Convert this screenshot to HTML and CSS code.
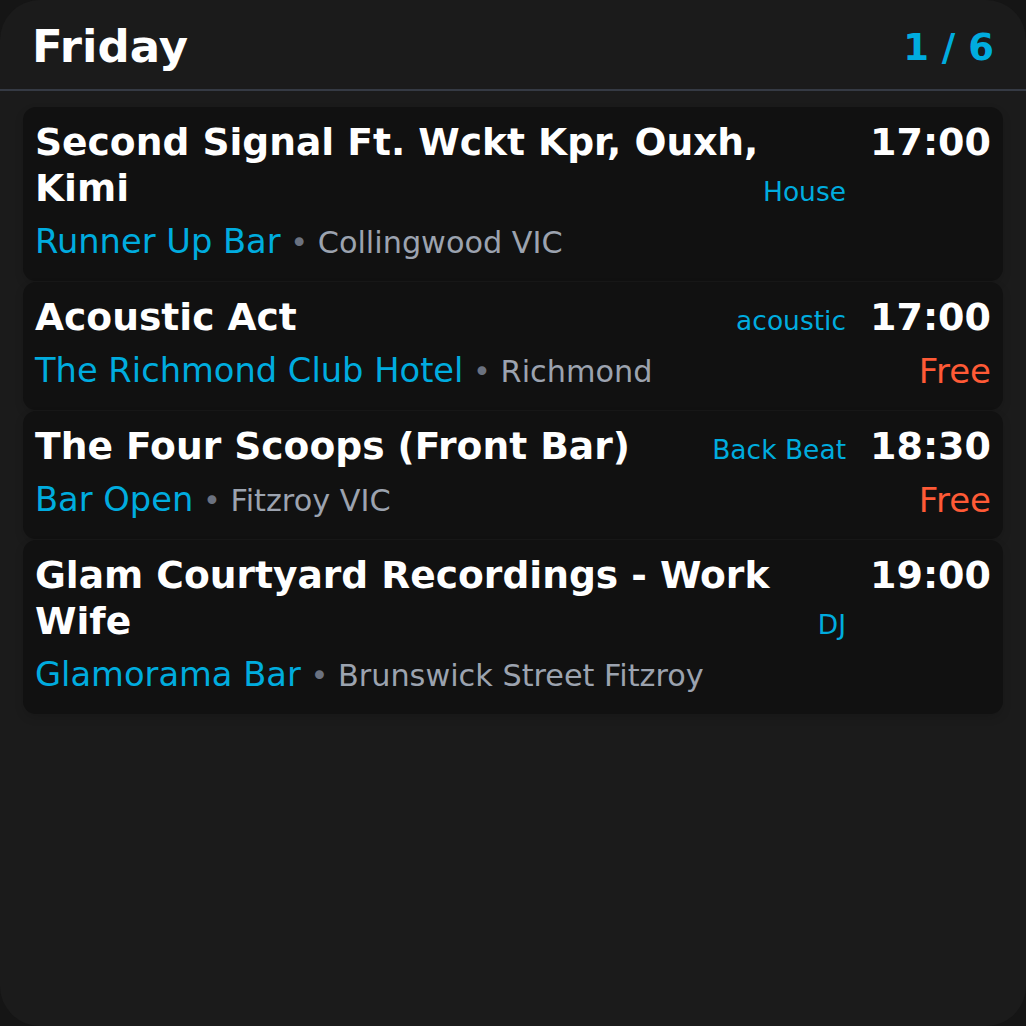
FILE: index.html
```html
<!DOCTYPE html>
<html>
<head>
<meta charset="utf-8">
<link rel="stylesheet" href="styles.css">
</head>
<body>
<div class="panel">
  <header class="header">
    <h1 class="day">Friday</h1>
    <div class="counter">1 / 6</div>
  </header>
  <div class="list">
    <div class="card">
      <div class="main">
        <div class="title-row">
          <div class="title">Second Signal Ft. Wckt Kpr, Ouxh, Kimi</div>
          <div class="genre">House</div>
        </div>
        <div class="place"><span class="venue">Runner Up Bar</span><span class="sep"> • </span><span class="loc">Collingwood VIC</span></div>
      </div>
      <div class="when">
        <div class="time">17:00</div>
      </div>
    </div>
    <div class="card">
      <div class="main">
        <div class="title-row">
          <div class="title">Acoustic Act</div>
          <div class="genre">acoustic</div>
        </div>
        <div class="place"><span class="venue">The Richmond Club Hotel</span><span class="sep"> • </span><span class="loc">Richmond</span></div>
      </div>
      <div class="when">
        <div class="time">17:00</div>
        <div class="price">Free</div>
      </div>
    </div>
    <div class="card">
      <div class="main">
        <div class="title-row">
          <div class="title">The Four Scoops (Front Bar)</div>
          <div class="genre">Back Beat</div>
        </div>
        <div class="place"><span class="venue">Bar Open</span><span class="sep"> • </span><span class="loc">Fitzroy VIC</span></div>
      </div>
      <div class="when">
        <div class="time">18:30</div>
        <div class="price">Free</div>
      </div>
    </div>
    <div class="card">
      <div class="main">
        <div class="title-row">
          <div class="title">Glam Courtyard Recordings - Work Wife</div>
          <div class="genre">DJ</div>
        </div>
        <div class="place"><span class="venue">Glamorama Bar</span><span class="sep"> • </span><span class="loc">Brunswick Street Fitzroy</span></div>
      </div>
      <div class="when">
        <div class="time">19:00</div>
      </div>
    </div>
  </div>
</div>
</body>
</html>
```
FILE: styles.css
```css
html, body {
  margin: 0;
  padding: 0;
  background: #151515;
}
body {
  font-family: "DejaVu Sans", sans-serif;
  color: #ffffff;
}
.panel {
  width: 1026px;
  height: 1026px;
  box-sizing: border-box;
  background: #1b1b1b;
  border-radius: 40px;
  overflow: hidden;
}
.header {
  height: 91px;
  box-sizing: border-box;
  padding: 5px 32px 0 32px;
  display: flex;
  align-items: center;
  justify-content: space-between;
  border-bottom: 2px solid #353a44;
}
.day {
  margin: 0;
  font-size: 45px;
  font-weight: bold;
  line-height: 1.164;
}
.counter {
  font-size: 37px;
  font-weight: bold;
  color: #00acdf;
}
.list {
  padding: 16px 23px;
  display: flex;
  flex-direction: column;
  gap: 1px;
}
.card {
  background: #111111;
  border-radius: 13px;
  padding: 12px 12px 19px 12px;
  display: flex;
  gap: 24px;
  box-shadow: 0 4px 10px rgba(0, 0, 0, 0.12);
}
.main {
  flex: 1;
  min-width: 0;
}
.title-row {
  display: flex;
  align-items: last baseline;
}
.title {
  flex: 1;
  font-size: 37.6px;
  font-weight: bold;
  line-height: 46px;
}
.genre {
  font-size: 26.5px;
  color: #00acdf;
  white-space: nowrap;
}
.place {
  margin-top: 11px;
  font-size: 33.7px;
  line-height: 40px;
}
.venue {
  color: #00acdf;
}
.sep {
  font-size: 30.3px;
  line-height: 1;
  color: #6b7280;
}
.loc {
  font-size: 30.3px;
  line-height: 1;
  color: #9ca3af;
}
.when {
  display: flex;
  flex-direction: column;
  align-items: flex-end;
}
.time {
  font-size: 38px;
  font-weight: bold;
  line-height: 46px;
}
.price {
  margin-top: 11px;
  font-size: 34px;
  line-height: 40px;
  color: #ff5a36;
}
```
